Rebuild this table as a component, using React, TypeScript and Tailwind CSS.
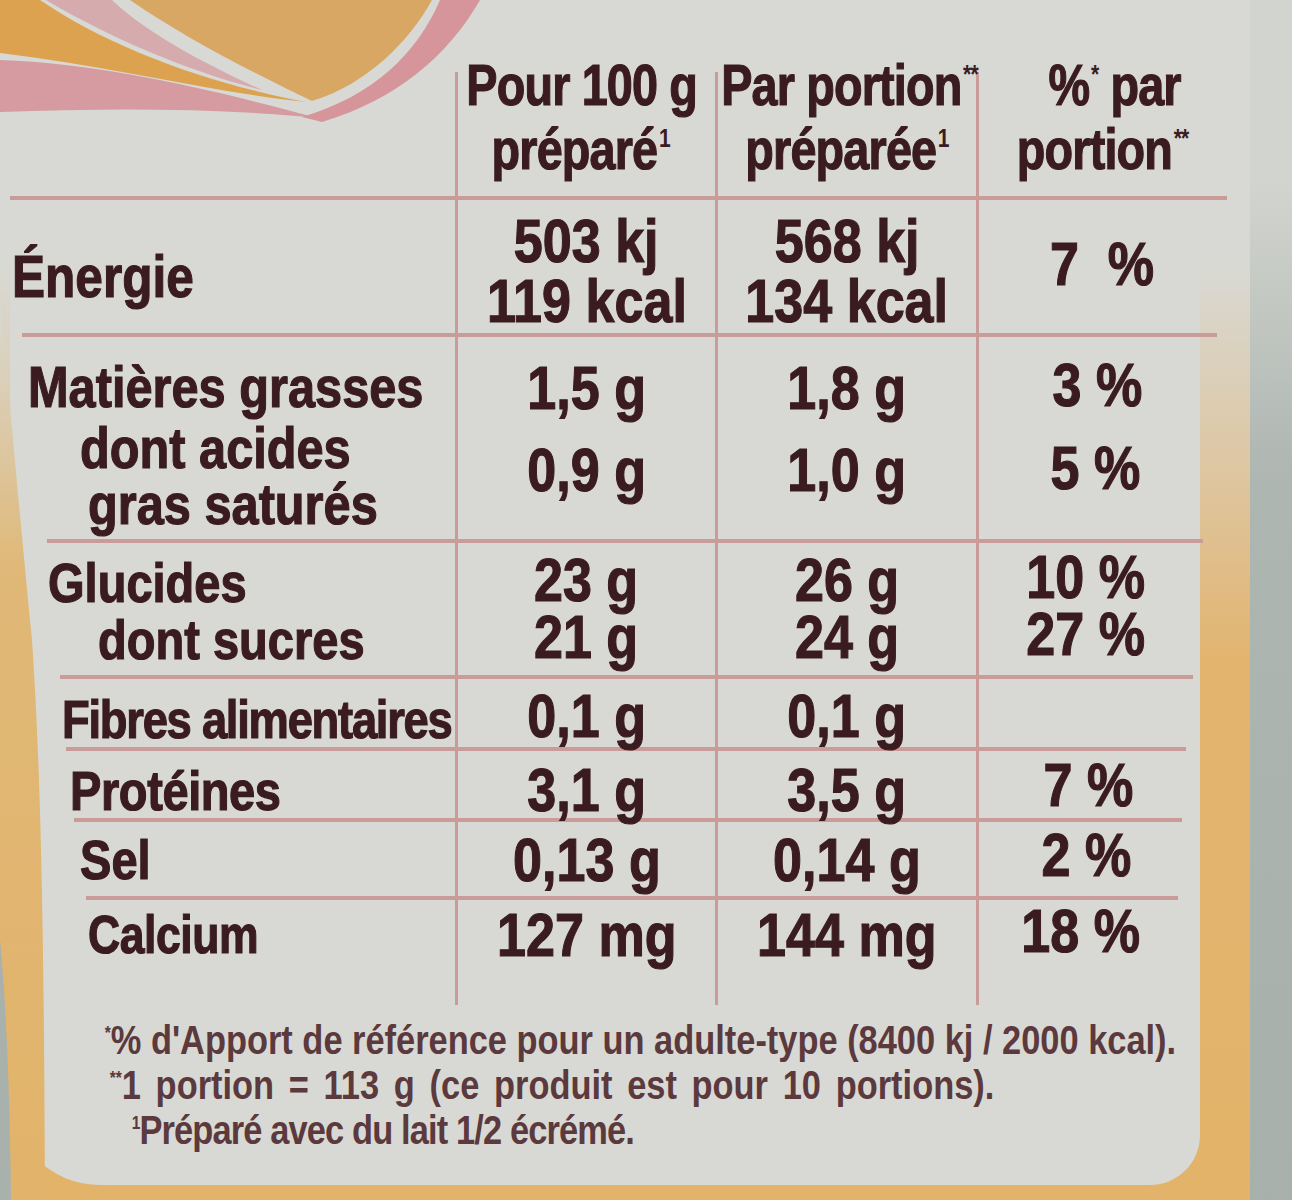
import React from 'react';

const font = "font-['Liberation_Sans','Arial',sans-serif]";
const lineCol = 'border-[#c99c9a]';
const heavy = '[-webkit-text-stroke:1.2px_currentColor]';

// Liberation Sans squeezed to the label's condensed proportions
const LBL = `inline-block whitespace-nowrap origin-left scale-x-[0.84] ${heavy}`;
const VAL = `inline-block whitespace-nowrap scale-x-[0.84] ${heavy}`;
const HDR = `inline-block whitespace-nowrap scale-x-[0.82] tracking-[-1px] ${heavy}`;
const FOOT = 'inline-block whitespace-nowrap origin-left scale-x-[0.86]';

function T({ children, className = '' }: { children: React.ReactNode; className?: string }) {
  return <span className={className}>{children}</span>;
}

function Sup({ children }: { children: React.ReactNode }) {
  return <span className="relative -top-[0.85em] ml-[2px] text-[0.45em] leading-none [-webkit-text-stroke:0px]">{children}</span>;
}

function Swirl() {
  return (
    <svg className="absolute left-0 top-0" width="490" height="130" viewBox="0 0 490 130">
      <path d="M0,60 C110,64 220,92 318,118 C220,108 110,108 0,112 Z" fill="#d59ba1" />
      <path d="M0,0 L40,0 C110,48 210,84 306,102 C210,92 110,66 0,53 Z" fill="#dca24f" />
      <path d="M46,0 L112,0 C150,36 210,66 262,90 C190,72 110,38 46,0 Z" fill="#d5abae" />
      <path d="M130,0 L432,0 C410,40 368,84 312,101 C256,74 188,40 130,0 Z" fill="#d8a763" />
      <path d="M440,0 L480,0 C448,56 396,100 322,122 L302,117 C374,96 418,52 440,0 Z" fill="#d5959b" />
    </svg>
  );
}

// slanted left edge of the carton (orange print band + background)
function LeftEdge() {
  return (
    <svg className="absolute left-0 top-0" width="60" height="1200" viewBox="0 0 60 1200">
      <defs>
        <linearGradient id="edge" x1="0" y1="0" x2="0" y2="1">
          <stop offset="0" stopColor="#d8d9d4" />
          <stop offset="0.3" stopColor="#e0b877" />
          <stop offset="1" stopColor="#e2b36a" />
        </linearGradient>
      </defs>
      <path d="M0,300 C8,380 20,520 32,640 C40,760 44,900 45,1200 L0,1200 Z" fill="url(#edge)" />
      <path d="M0,940 C6,1000 10,1100 11,1200 L0,1200 Z" fill="#a9b1ac" />
    </svg>
  );
}

function ValCell({ children, className = '' }: { children: React.ReactNode; className?: string }) {
  return (
    <div className={`border-l-[3px] ${lineCol} flex flex-col items-center text-[62px] ${className}`}>
      {children}
    </div>
  );
}

export default function App() {
  return (
    <div className={`relative flex h-[1200px] w-[1292px] overflow-hidden bg-gradient-to-b from-[#d2d4cf] from-[15%] via-[#aeb6b1] via-[40%] to-[#a8b0ab] ${font} font-bold text-[#3a1b1f]`}>
      <div className="flex h-full w-[1250px] shrink-0 bg-gradient-to-b from-[#d8d9d4] from-[22%] via-[#e2b46e] via-[55%] to-[#e3b36a] pb-[15px] pl-[10px] pr-[50px]">
        <div className="flex min-w-0 flex-1 flex-col rounded-bl-[90px] rounded-br-[50px] bg-[#d8d9d4]">
          <div className="h-[72px] shrink-0" />

          {/* header */}
          <div className={`grid h-[128px] w-[1217px] shrink-0 grid-cols-[445px_260px_261px_251px] border-b-4 ${lineCol} text-[57px] leading-[64px]`}>
            <div />
            <div className={`border-l-[3px] ${lineCol} flex flex-col items-center`}>
              <div className="-mt-[19px] flex flex-col items-center">
                <T className={`${HDR} -ml-[10px]`}>Pour 100 g</T>
                <T className={`${HDR} -ml-[12px]`}>préparé<Sup>1</Sup></T>
              </div>
            </div>
            <div className={`border-l-[3px] ${lineCol} flex flex-col items-center`}>
              <div className="-mt-[19px] flex flex-col items-center">
                <T className={`${HDR} ml-[4px]`}>Par portion<Sup>**</Sup></T>
                <T className={HDR}>préparée<Sup>1</Sup></T>
              </div>
            </div>
            <div className={`border-l-[3px] ${lineCol} flex flex-col items-center`}>
              <div className="-mt-[19px] flex flex-col items-center">
                <T className={`${HDR} ml-[24px]`}>%<Sup>*</Sup> par</T>
                <T className={HDR}>portion<Sup>**</Sup></T>
              </div>
            </div>
          </div>

          {/* energie */}
          <div className={`ml-[12px] grid h-[137px] w-[1195px] shrink-0 grid-cols-[433px_260px_261px_241px] border-b-4 ${lineCol} leading-[58px]`}>
            <div className="flex items-start pt-[48px]">
              <T className={`${LBL} -ml-[10px] text-[59px]`}>Énergie</T>
            </div>
            <ValCell className="pt-[11px] leading-[60px]">
              <T className={VAL}>503 kj</T>
              <T className={VAL}>119 kcal</T>
            </ValCell>
            <ValCell className="pt-[11px] leading-[60px]">
              <T className={VAL}>568 kj</T>
              <T className={VAL}>134 kcal</T>
            </ValCell>
            <ValCell className="pt-[35px]">
              <T className={`${VAL} ml-[8px]`}>7&nbsp; %</T>
            </ValCell>
          </div>

          {/* matieres grasses */}
          <div className={`ml-[37px] grid h-[206px] w-[1156px] shrink-0 grid-cols-[408px_260px_261px_227px] border-b-4 ${lineCol} leading-[58px]`}>
            <div className="flex flex-col items-start pt-[21px] text-[58px]">
              <T className={`${LBL} -ml-[19px]`}>Matières grasses</T>
              <T className={`${LBL} ml-[33px] mt-[3px]`}>dont acides</T>
              <T className={`${LBL} ml-[41px] -mt-[2px]`}>gras saturés</T>
            </div>
            <ValCell className="pt-[22px]">
              <T className={VAL}>1,5 g</T>
              <T className={`${VAL} mt-[24px]`}>0,9 g</T>
            </ValCell>
            <ValCell className="pt-[22px]">
              <T className={VAL}>1,8 g</T>
              <T className={`${VAL} mt-[24px]`}>1,0 g</T>
            </ValCell>
            <ValCell className="pt-[19px]">
              <T className={`${VAL} ml-[12px]`}>3 %</T>
              <T className={`${VAL} ml-[8px] mt-[25px]`}>5 %</T>
            </ValCell>
          </div>

          {/* glucides */}
          <div className={`ml-[50px] grid h-[136px] w-[1133px] shrink-0 grid-cols-[395px_260px_261px_217px] border-b-4 ${lineCol} leading-[57px]`}>
            <div className="flex flex-col items-start pt-[11px] text-[56px]">
              <T className={`${LBL} -ml-[12px]`}>Glucides</T>
              <T className={`${LBL} ml-[38px]`}>dont sucres</T>
            </div>
            <ValCell className="pt-[8px]">
              <T className={VAL}>23 g</T>
              <T className={VAL}>21 g</T>
            </ValCell>
            <ValCell className="pt-[8px]">
              <T className={VAL}>26 g</T>
              <T className={VAL}>24 g</T>
            </ValCell>
            <ValCell className="pt-[5px]">
              <T className={VAL}>10 %</T>
              <T className={VAL}>27 %</T>
            </ValCell>
          </div>

          {/* fibres */}
          <div className={`ml-[56px] grid h-[72px] w-[1120px] shrink-0 grid-cols-[389px_260px_261px_210px] border-b-4 ${lineCol} leading-[58px]`}>
            <div className="flex items-start pt-[11px]">
              <T className={`${LBL} -ml-[4px] text-[54px] tracking-[-1.5px]`}>Fibres alimentaires</T>
            </div>
            <ValCell className="pt-[8px]">
              <T className={VAL}>0,1 g</T>
            </ValCell>
            <ValCell className="pt-[8px]">
              <T className={VAL}>0,1 g</T>
            </ValCell>
            <ValCell>
              <span />
            </ValCell>
          </div>

          {/* proteines */}
          <div className={`ml-[64px] grid h-[71px] w-[1108px] shrink-0 grid-cols-[381px_260px_261px_206px] border-b-4 ${lineCol} leading-[58px]`}>
            <div className="flex items-start pt-[11px]">
              <T className={`${LBL} -ml-[4px] text-[56px] tracking-[-0.5px]`}>Protéines</T>
            </div>
            <ValCell className="pt-[10px]">
              <T className={VAL}>3,1 g</T>
            </ValCell>
            <ValCell className="pt-[10px]">
              <T className={VAL}>3,5 g</T>
            </ValCell>
            <ValCell className="pt-[5px]">
              <T className={`${VAL} ml-[16px]`}>7 %</T>
            </ValCell>
          </div>

          {/* sel */}
          <div className={`ml-[76px] grid h-[78px] w-[1092px] shrink-0 grid-cols-[369px_260px_261px_202px] border-b-4 ${lineCol} leading-[58px]`}>
            <div className="flex items-start pt-[9px]">
              <T className={`${LBL} -ml-[6px] text-[56px]`}>Sel</T>
            </div>
            <ValCell className="pt-[9px]">
              <T className={VAL}>0,13 g</T>
            </ValCell>
            <ValCell className="pt-[9px]">
              <T className={VAL}>0,14 g</T>
            </ValCell>
            <ValCell className="pt-[4px]">
              <T className={`${VAL} ml-[16px]`}>2 %</T>
            </ValCell>
          </div>

          {/* calcium */}
          <div className="ml-[76px] grid h-[105px] w-[1090px] shrink-0 grid-cols-[369px_260px_261px_200px] leading-[58px]">
            <div className="flex items-start pt-[6px]">
              <T className={`${LBL} ml-[2px] text-[53px] tracking-[-0.5px]`}>Calcium</T>
            </div>
            <ValCell className="pt-[6px]">
              <T className={VAL}>127 mg</T>
            </ValCell>
            <ValCell className="pt-[6px]">
              <T className={VAL}>144 mg</T>
            </ValCell>
            <ValCell className="pt-[2px]">
              <T className={`${VAL} ml-[6px]`}>18 %</T>
            </ValCell>
          </div>

          {/* footnotes */}
          <div className="flex flex-col items-start pt-[13px] text-[40px] leading-[45px] text-[#5b393d]">
            <T className={`${FOOT} ml-[93px]`}><Sup>*</Sup>% d'Apport de référence pour un adulte-type (8400 kj / 2000 kcal).</T>
            <T className={`${FOOT} ml-[98px] [word-spacing:6px]`}><Sup>**</Sup>1 portion = 113 g (ce produit est pour 10 portions).</T>
            <T className={`${FOOT} ml-[120px] tracking-[-1px]`}><Sup>1</Sup>Préparé avec du lait 1/2 écrémé.</T>
          </div>
        </div>
      </div>
      <LeftEdge />
      <Swirl />
    </div>
  );
}
